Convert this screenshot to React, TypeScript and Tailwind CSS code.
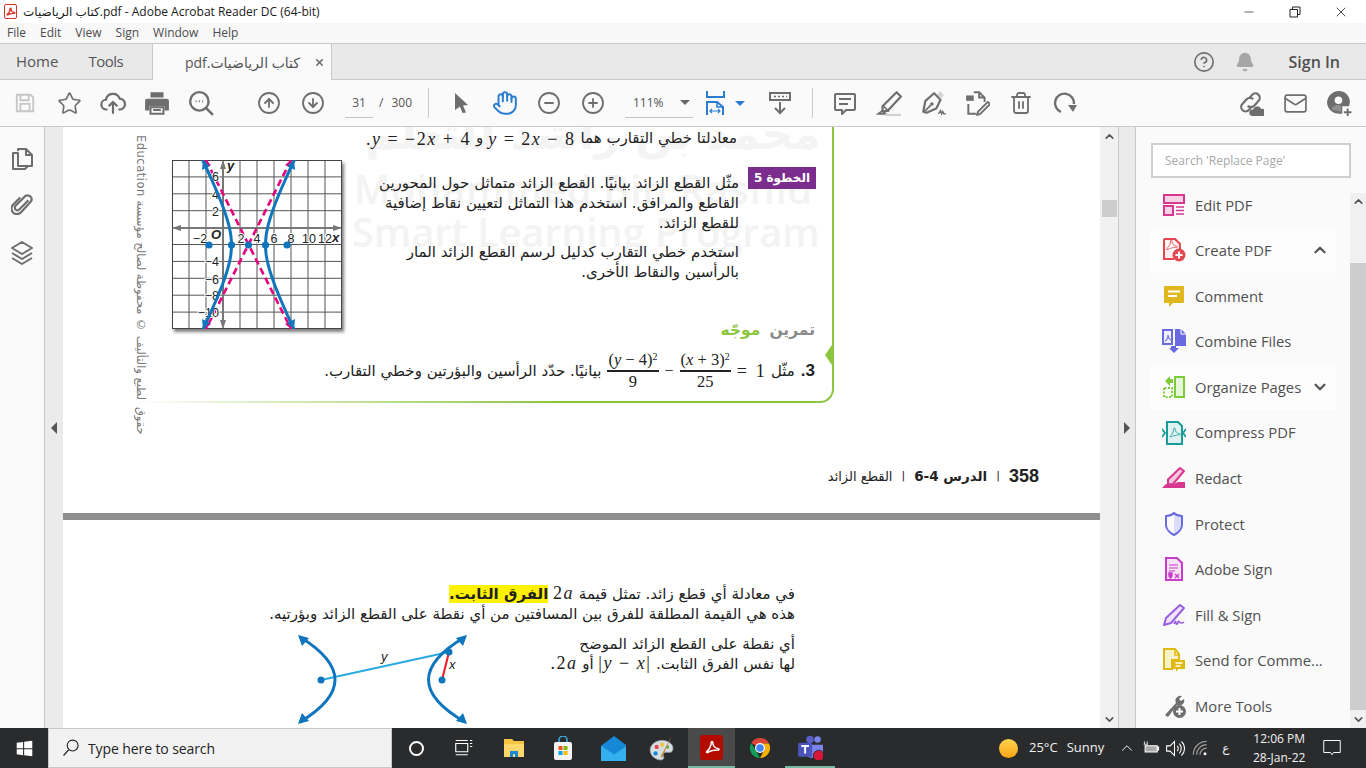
import React from 'react';
import { Star, CircleArrowUp, CircleArrowDown, CircleMinus, CirclePlus, Hand, Trash2, ChevronUp, ChevronDown, CircleHelp, Bell, X, Minus, Mail } from 'lucide-react';

const Svg: React.FC<{ size?: number; children: React.ReactNode; box?: string }> = ({ size = 24, children, box = '0 0 24 24' }) => (
  <svg width={size} height={size} viewBox={box} fill="none" stroke="none">
    {children}
  </svg>
);

const PDF_SWOOSH = 'M5 18C8 16 11 10 11 6C11 4 13 4 13 6C13 10 16 14 20 14C22 14 22 16 20 16C16 16 10 17 7 19C5 20 4 19 5 18Z';

const GRAY = '#6e6e6e';

const SaveIcon = () => (
  <Svg size={22}>
    <path d="M3 3h15l3 3v15H3z M7 3v6h9V3 M7 21v-8h10v8" stroke="#c6c6c6" strokeWidth="2" />
  </Svg>
);
const CloudUpIcon = () => (
  <Svg size={26}>
    <path d="M7 18H6a4.5 4.5 0 0 1-.5-9 6.5 6.5 0 0 1 12.6-1A5 5 0 0 1 18 18h-1 M12 22V11 M8 15l4-4 4 4" stroke={GRAY} strokeWidth="2" strokeLinejoin="round" />
  </Svg>
);
const PrintIcon = () => (
  <Svg size={26}>
    <path d="M6 2h12v5H6z M3 8h18a2 2 0 0 1 2 2v9h-4v-4H5v4H1v-9a2 2 0 0 1 2-2z" fill={GRAY} />
    <path d="M6 16h12v6H6z M8.5 18.5h7" stroke={GRAY} strokeWidth="1.8" />
  </Svg>
);
const ZoomSearchIcon = () => (
  <Svg size={26}>
    <circle cx="10.5" cy="10.5" r="8.5" stroke={GRAY} strokeWidth="2.2" />
    <path d="M16.5 16.5L23 23" stroke={GRAY} strokeWidth="2.4" />
    <path d="M7 10.5h1 M10 10.5h1 M13 10.5h1" stroke={GRAY} strokeWidth="1.8" />
  </Svg>
);
const ArrowToolIcon = () => (
  <Svg size={24}>
    <path d="M6 2L19 14L14 14.5L17 21.5L13.5 22L11 15.5L6 19z" fill={GRAY} />
  </Svg>
);
const FitWidthIcon = () => (
  <Svg size={24} box="0 0 24 24">
    <path d="M4 0v6h17V0" stroke="#2a7ccf" strokeWidth="2" />
    <path d="M4 24V11h10l6 5v8" stroke="#2a7ccf" strokeWidth="2" />
    <path d="M14 11v5h6" stroke="#2a7ccf" strokeWidth="1.5" />
    <path d="M7 20h10 M9 18l-2 2 2 2 M15 18l2 2-2 2" stroke="#2a7ccf" strokeWidth="1.2" />
  </Svg>
);
const SaveDownIcon = () => (
  <Svg size={24}>
    <path d="M2 2h20v7H2z" stroke={GRAY} strokeWidth="2" />
    <path d="M6 5.5h2 M10 5.5h2 M14 5.5h2 M18 5.5h1" stroke={GRAY} strokeWidth="1.6" />
    <path d="M12 11v11 M7 17l5 5 5-5" stroke={GRAY} strokeWidth="2" />
  </Svg>
);
const CommentIcon = () => (
  <Svg size={24}>
    <path d="M3 3h18a1 1 0 0 1 1 1v14a1 1 0 0 1-1 1h-8l-4 4v-4H3a1 1 0 0 1-1-1V4a1 1 0 0 1 1-1z" stroke={GRAY} strokeWidth="2" strokeLinejoin="round" />
    <path d="M6 8h12 M6 13h9" stroke={GRAY} strokeWidth="1.8" />
  </Svg>
);
const HighlightIcon = () => (
  <Svg size={26}>
    <path d="M19 2l4 4-12 13-5 1 0-5z" stroke={GRAY} strokeWidth="2" strokeLinejoin="round" />
    <path d="M7 15l5 5 M2 22l4-3 3 3z" stroke={GRAY} strokeWidth="1.6" />
    <path d="M8 23h15" stroke="#d0d0d0" strokeWidth="2" />
  </Svg>
);
const PenSignIcon = () => (
  <Svg size={26}>
    <path d="M13 3l6 6-4 8-9 4-3-1 2-10z" stroke={GRAY} strokeWidth="2" strokeLinejoin="round" />
    <path d="M4 20l6-6" stroke={GRAY} strokeWidth="1.5" />
    <circle cx="11" cy="13" r="1.6" fill={GRAY} />
    <path d="M16 4l3-3 3 4-3 3" fill="#d5d5d5" />
    <path d="M17 22l2-3 1 3 1-2 1 2h2" stroke={GRAY} strokeWidth="1.3" />
  </Svg>
);
const EditDocIcon = () => (
  <Svg size={26}>
    <path d="M2 5h7v5H2z" fill={GRAY} />
    <path d="M9 2h5l5 5v4 M4 13v9h7 M14 2v5h5" stroke={GRAY} strokeWidth="1.8" />
    <path d="M22 11l2 2-9 9-3 1 1-3z" stroke={GRAY} strokeWidth="1.8" strokeLinejoin="round" />
  </Svg>
);
const RotateIcon = () => (
  <Svg size={24}>
    <path d="M8 21A9.5 9.5 0 1 1 21 13" stroke={GRAY} strokeWidth="2.4" />
    <path d="M15 14h9l-4 7z" fill={GRAY} />
  </Svg>
);
const LinkCloudIcon = () => (
  <Svg size={26}>
    <path d="M11 7l3-3.5a4 4 0 0 1 6 5.5l-4 4.5a4 4 0 0 1-6 0 M14 14l-3 3.5a4 4 0 0 1-6-5.5l4-4.5a4 4 0 0 1 6 0" stroke={GRAY} strokeWidth="2" transform="translate(-1 1)" />
    <path d="M13 24a3 3 0 0 1 1-6 4 4 0 0 1 7.5-.5A3.3 3.3 0 0 1 23 24z" fill={GRAY} />
  </Svg>
);
const PersonPlusIcon = () => (
  <Svg size={26}>
    <path d="M12 1a10 10 0 0 1 10 10c0 2-.5 3-1 4h-6v7h-2.500A11 11 0 0 1 1 12 11 11 0 0 1 12 1z" fill={GRAY} />
    <circle cx="11.500" cy="9.500" r="3.500" fill="#fafafa" />
    <path d="M5 18a7 4 0 0 1 8-4l1 1v5" fill="#fafafa" opacity="0.25" />
    <path d="M20 17v7 M16.500 20.500h7" stroke={GRAY} strokeWidth="1.800" />
  </Svg>
);

const PagesIcon = () => (
  <Svg size={24}>
    <path d="M8 4V2h8l6 6v11h-4 M16 2v6h6" stroke={GRAY} strokeWidth="2" strokeLinejoin="round" />
    <path d="M8 6H3v16h12l3-3H8z" stroke={GRAY} strokeWidth="2" strokeLinejoin="round" />
  </Svg>
);
const ClipIcon = () => (
  <Svg size={22}>
    <path d="M19 9L9 19a2.800 2.800 0 0 1-4-4L16 4a4.500 4.500 0 0 1 6 6L11 22a6 6 0 0 1-9-8l8-8" stroke={GRAY} strokeWidth="2.400" transform="translate(0 -1)" />
  </Svg>
);
const LayersIcon = () => (
  <Svg size={24}>
    <path d="M12 1l10 6-10 6L2 7z M2 12l10 6 10-6 M2 17l10 6 10-6" stroke={GRAY} strokeWidth="2" strokeLinejoin="round" />
  </Svg>
);

const EditPdfIcon = () => (
  <Svg size={24}>
    <rect x="2" y="2" width="20" height="8" fill="#f6d3e5" stroke="#d83790" strokeWidth="2" />
    <rect x="2" y="13" width="9" height="9" fill="#f6d3e5" stroke="#d83790" strokeWidth="2" />
    <path d="M14 14h8 M14 17.500h8 M14 21h8" stroke="#d83790" strokeWidth="1.300" />
  </Svg>
);
const CreatePdfIcon = () => (
  <Svg size={24}>
    <path d="M2 1h11l5 5v8 M2 1v20h10" fill="#fbeced" stroke="#e34850" strokeWidth="2" />
    <path d={PDF_SWOOSH} stroke="#e34850" strokeWidth="1.200" transform="translate(1.500 -1) scale(0.650)" />
    <circle cx="17" cy="17" r="6.500" fill="#e34850" />
    <path d="M17 13.500v7 M13.500 17h7" stroke="#fff" strokeWidth="2" />
  </Svg>
);
const CommentColorIcon = () => (
  <Svg size={24}>
    <path d="M3 2h18a1 1 0 0 1 1 1v15a1 1 0 0 1-1 1H11l-4 4v-4H3a1 1 0 0 1-1-1V3a1 1 0 0 1 1-1z" fill="#e0b71f" />
    <path d="M6 7.500h12 M6 12h9" stroke="#fff" strokeWidth="2" />
  </Svg>
);
const CombineIcon = () => (
  <Svg size={24}>
    <path d="M1 1h9v14H1z" fill="#eeeefc" stroke="#6a6ae0" strokeWidth="2" />
    <path d="M3 12c2-1 3-4 3-6 0 3 1 4 3 5" stroke="#6a6ae0" strokeWidth="1.100" />
    <path d="M13 0h6l5 5v12H13z" fill="#6a6ae0" />
    <path d="M19 0v5h5" stroke="#fff" strokeWidth="1" />
    <path d="M9 17h5v2h3l-5 5-5-5h2z" fill="#6a6ae0" />
  </Svg>
);
const OrganizeIcon = () => (
  <Svg size={24}>
    <rect x="13" y="2" width="9" height="20" fill="#e7f6d9" stroke="#7ccb3a" strokeWidth="2" />
    <path d="M2 13v9h8v-9z" stroke="#7ccb3a" strokeWidth="2" strokeDasharray="2 1.500" />
    <path d="M3 6l5-5v3h3v4H8v3z" fill="#7ccb3a" />
  </Svg>
);
const CompressIcon = () => (
  <Svg size={24}>
    <path d="M5 1h11l4 4v18H5z" fill="#dff1f1" stroke="#1a9a9a" strokeWidth="2" />
    <path d={PDF_SWOOSH} stroke="#1a9a9a" strokeWidth="1.300" transform="translate(5 4) scale(0.620)" />
    <path d="M0 8l3 4-3 4 M24 8l-3 4 3 4" stroke="#1a9a9a" strokeWidth="1.800" />
  </Svg>
);
const RedactIcon = () => (
  <Svg size={24}>
    <path d="M18 2l4 3-11 13-5 .500 0-5z" fill="#f6c7de" stroke="#d83790" strokeWidth="2" strokeLinejoin="round" />
    <path d="M0 22l4-4h4l2 1 6-3h7v6z" fill="#d83790" />
  </Svg>
);
const ShieldIcon = () => (
  <Svg size={24}>
    <path d="M12 1c2 2 5 3 8 3v9c0 4-4 8-8 10z" fill="#dcdcfb" />
    <path d="M12 1c2 2 5 3 8 3v9c0 4-4 8-8 10-4-2-8-6-8-10V4c3 0 6-1 8-3z" stroke="#6a6ae0" strokeWidth="2" strokeLinejoin="round" />
  </Svg>
);
const AdobeSignIcon = () => (
  <Svg size={24}>
    <path d="M4 1h11l5 5v17H4z" fill="#f6e3f6" stroke="#c83cc8" strokeWidth="2" />
    <path d="M7 8h9 M7 11h9 M7 14h6" stroke="#c83cc8" strokeWidth="1.200" />
    <path d="M7 16h3v3l-1.500 2L7 19z M13 17l4 4 M17 17l-4 4" fill="#c83cc8" stroke="#c83cc8" strokeWidth="1.400" />
  </Svg>
);
const FillSignIcon = () => (
  <Svg size={24}>
    <path d="M18 2l4 3L9 20l-7 2 2-7z" fill="#efe4fb" stroke="#9a5fe0" strokeWidth="2" strokeLinejoin="round" />
    <path d="M12 21c1-3 2-3 2-1s2 1 2-1 2 1 3 1 2 0 3-1" stroke="#9a5fe0" strokeWidth="1.600" />
  </Svg>
);
const SendCommentIcon = () => (
  <Svg size={24}>
    <path d="M2 1h11l4 5v6H10v9H2z" fill="#f8f2c9" stroke="#dfb90f" strokeWidth="2" />
    <path d="M13 1v6h4" stroke="#dfb90f" strokeWidth="1.500" />
    <path d="M11 12h12v9h-7l-2 3v-3h-3z" fill="#dfb90f" />
    <path d="M13.500 15h7 M13.500 18h5" stroke="#fff" strokeWidth="1.300" />
  </Svg>
);
const MoreToolsIcon = () => (
  <Svg size={24}>
    <path d="M3 21L14 9a5 5 0 0 1 6-7l-3 3 2 2 3-2a5 5 0 0 1-7 6L6 23z" fill={GRAY} />
    <circle cx="17.500" cy="17.500" r="6.500" fill={GRAY} />
    <path d="M17.500 14v7 M14 17.500h7" stroke="#fff" strokeWidth="2" />
  </Svg>
);

const toolItems = [
  { label: 'Edit PDF', icon: EditPdfIcon },
  { label: 'Create PDF', icon: CreatePdfIcon, chevron: 'up' },
  { label: 'Comment', icon: CommentColorIcon },
  { label: 'Combine Files', icon: CombineIcon },
  { label: 'Organize Pages', icon: OrganizeIcon, chevron: 'down' },
  { label: 'Compress PDF', icon: CompressIcon },
  { label: 'Redact', icon: RedactIcon },
  { label: 'Protect', icon: ShieldIcon },
  { label: 'Adobe Sign', icon: AdobeSignIcon },
  { label: 'Fill & Sign', icon: FillSignIcon },
  { label: 'Send for Comme...', icon: SendCommentIcon },
  { label: 'More Tools', icon: MoreToolsIcon },
];

const Btn: React.FC<{ children: React.ReactNode }> = ({ children }) => (
  <div className="w-[44px] h-full flex items-center justify-center shrink-0">{children}</div>
);

const TitleBar = () => (
  <div className="h-[23px] bg-white flex items-center shrink-0">
    <div className="ml-[4px] w-[13px] h-[15px] rounded-[2px] border border-[#d9312b] bg-white flex items-center justify-center">
      <Svg size={11}>
        <path d={PDF_SWOOSH} stroke="#d9312b" strokeWidth="3" />
      </Svg>
    </div>
    <span className="ml-[6px] text-[12px] text-[#1a1a1a] whitespace-nowrap">كتاب الرياضيات.pdf - Adobe Acrobat Reader DC (64-bit)</span>
    <div className="ml-auto flex items-center text-[#222] mr-[2px]">
      <div className="w-[46px] flex justify-center"><Minus size={14} strokeWidth={1.200} /></div>
      <div className="w-[46px] flex justify-center">
        <Svg size={12}>
          <path d="M2 7h15v15H2z M7 7V2h15v15h-5" stroke="#222" strokeWidth="2" />
        </Svg>
      </div>
      <div className="w-[46px] flex justify-center"><X size={16} strokeWidth={1.200} /></div>
    </div>
  </div>
);

const MenuBar = () => (
  <div className="h-[20px] bg-[#f8f8f8] flex items-center gap-[14px] pl-[7px] text-[12px] text-[#4b4b4b] shrink-0">
    {['File', 'Edit', 'View', 'Sign', 'Window', 'Help'].map((m) => (
      <span key={m}>{m}</span>
    ))}
  </div>
);

const TabRow = () => (
  <div className="h-[37px] bg-[#e9e9e9] border-y border-[#c9c9c9] flex items-stretch shrink-0 text-[15px] text-[#555]">
    <div className="w-[152px] flex items-center pl-[16px] gap-[30px]">
      <span>Home</span>
      <span className="tracking-[-0.5px]">Tools</span>
    </div>
    <div className="w-[180px] -mb-px bg-[#fafafa] border-x border-[#c9c9c9] flex items-center pl-[30px]">
      <span dir="rtl" className="text-[14px] text-[#555] w-[117px] whitespace-nowrap">كتاب الرياضيات.pdf</span>
      <X size={11} strokeWidth={3} className="ml-[14px] text-[#666]" />
    </div>
    <div className="ml-auto flex items-center">
      <CircleHelp size={22} strokeWidth={1.800} className="text-[#6e6e6e]" />
      <Bell size={20} fill="#a6a6a6" className="ml-[20px] text-[#a6a6a6]" />
      <span className="ml-[34px] mr-[26px] font-semibold text-[16px] text-[#505050]">Sign In</span>
    </div>
  </div>
);

const Toolbar = () => (
  <div className="h-[47px] bg-[#fafafa] border-b border-[#c9c9c9] flex items-center pl-[3px] shrink-0 text-[#6e6e6e]">
    <Btn><SaveIcon /></Btn>
    <Btn><Star size={25} strokeWidth={1.600} /></Btn>
    <Btn><CloudUpIcon /></Btn>
    <Btn><PrintIcon /></Btn>
    <Btn><ZoomSearchIcon /></Btn>
    <div className="w-[24px]" />
    <Btn><CircleArrowUp size={24} strokeWidth={1.800} /></Btn>
    <Btn><CircleArrowDown size={24} strokeWidth={1.800} /></Btn>
    <div className="ml-[10px] w-[28px] h-[30px] border-b border-[#c4c4c4] flex items-center justify-center text-[12px] text-[#555]">31</div>
    <span className="ml-[6px] text-[12px] text-[#555]">/</span>
    <span className="ml-[8px] text-[12px] text-[#555]">300</span>
    <div className="ml-[16px] w-px h-[30px] bg-[#c9c9c9]" />
    <div className="w-[10px]" />
    <Btn><ArrowToolIcon /></Btn>
    <Btn><Hand size={26} strokeWidth={1.800} className="text-[#2a7ccf]" /></Btn>
    <Btn><CircleMinus size={24} strokeWidth={1.800} /></Btn>
    <Btn><CirclePlus size={24} strokeWidth={1.800} /></Btn>
    <div className="ml-[10px] w-[68px] h-[30px] border-b border-[#c4c4c4] flex items-center pl-[8px] text-[12px] text-[#555]">
      111%
      <span className="ml-[16px] w-0 h-0 border-x-[5px] border-x-transparent border-t-[5px] border-t-[#666]" />
    </div>
    <Btn><FitWidthIcon /></Btn>
    <span className="-ml-[2px] w-0 h-0 border-x-[5px] border-x-transparent border-t-[5px] border-t-[#2a7ccf]" />
    <div className="w-[13px]" />
    <Btn><SaveDownIcon /></Btn>
    <div className="ml-[10px] w-px h-[30px] bg-[#c9c9c9]" />
    <div className="w-[10px]" />
    <Btn><CommentIcon /></Btn>
    <Btn><HighlightIcon /></Btn>
    <Btn><PenSignIcon /></Btn>
    <Btn><EditDocIcon /></Btn>
    <Btn><Trash2 size={24} strokeWidth={1.800} /></Btn>
    <Btn><RotateIcon /></Btn>
    <div className="ml-auto flex items-center h-full pr-[5px]">
      <Btn><LinkCloudIcon /></Btn>
      <Btn><Mail size={25} strokeWidth={1.600} /></Btn>
      <Btn><PersonPlusIcon /></Btn>
    </div>
  </div>
);

const LeftRail = () => (
  <div className="flex shrink-0 h-full">
    <div className="w-[45px] bg-[#fafafa] border-r border-[#c9c9c9] flex flex-col items-center pt-[20px] gap-[22px]">
      <PagesIcon />
      <ClipIcon />
      <div className="mt-[4px]"><LayersIcon /></div>
    </div>
    <div className="w-[18px] bg-[#ebebeb] flex items-center justify-center">
      <span className="w-0 h-0 border-y-[6px] border-y-transparent border-r-[6px] border-r-[#555]" />
    </div>
  </div>
);

const hyperbola = (side: number) => {
  const pts: string[] = [];
  for (let dy = -85; dy <= 85; dy += 5) {
    const x = 76.5 + side * 17 * Math.sqrt(1 + (dy / 34) ** 2);
    pts.push(`${x.toFixed(1)},${85 + dy}`);
  }
  return pts.join(' ');
};

const BLUE = '#0f75bc';
const PINK = '#e6007e';

const gridLabels: [string, number, number][] = [
  ['−2', 28, 83], ['2', 69, 83], ['4', 85, 83], ['6', 102, 83], ['8', 119, 83], ['10', 137, 83], ['12', 153, 83],
];
const yLabels: [string, number][] = [
  ['6', 21], ['4', 39], ['2', 56], ['−4', 106], ['−6', 124], ['−8', 140], ['−10', 157],
];

const Graph = () => (
  <div className="w-[170px] h-[169px] ml-[38px] bg-white shadow-[2px_3px_3px_rgba(0,0,0,0.5)] shrink-0">
    <svg width="170" height="169" viewBox="0 0 170 169" className="font-['Liberation_Sans',sans-serif]">
      {[...Array(11).keys()].map((i) => (
        <g key={i}>
          <line x1={i * 17} y1="0" x2={i * 17} y2="169" stroke="#555" strokeWidth="1" />
          <line x1="0" y1={i * 16.9} x2="170" y2={i * 16.9} stroke="#555" strokeWidth="1" />
        </g>
      ))}
      <rect x="0.500" y="0.500" width="169" height="168" stroke="#444" fill="none" />
      <path d="M2 68H168 M51 2V167" stroke="#777" strokeWidth="2" />
      <path d="M0 68l9-3v6z M170 68l-9-3v6z M51 0l-3 9h6z M51 169l-3-9h6z" fill="#777" />
      <path d="M34 0L119 169 M119 0L34 169" stroke={PINK} strokeWidth="2.600" strokeDasharray="7 4" />
      <path d="M33 0l-1 8 7-3z M119 0l1 8-7-3z M33 169l-1-8 7 3z M119 169l1-8-7 3z" fill={PINK} />
      {gridLabels.map(([t, x, y]) => (
        <text key={t} x={x} y={y} fontSize="12.500" fill="#222" textAnchor="middle" stroke="#fff" strokeWidth="2" paintOrder="stroke">{t}</text>
      ))}
      {yLabels.map(([t, y]) => (
        <text key={t} x="47" y={y} fontSize="12.500" fill="#222" textAnchor="end" stroke="#fff" strokeWidth="2" paintOrder="stroke">{t}</text>
      ))}
      <polyline points={hyperbola(-1)} stroke={BLUE} strokeWidth="3" fill="none" />
      <polyline points={hyperbola(1)} stroke={BLUE} strokeWidth="3" fill="none" />
      <path d="M31 0l-1 10 8-4z M122 0l1 10-8-4z M31 169l-1-10 8 4z M122 169l1-10-8 4z" fill={BLUE} />
      {[37, 59.5, 76.5, 93.5, 115].map((cx) => (
        <circle key={cx} cx={cx} cy="85" r="3.600" fill={BLUE} />
      ))}
      <text x="39" y="79" fontSize="13" fontWeight="bold" fontStyle="italic" fill="#222">O</text>
      <text x="55" y="10" fontSize="13" fontWeight="bold" fontStyle="italic" fill="#222">y</text>
      <text x="160" y="82" fontSize="13" fontWeight="bold" fontStyle="italic" fill="#222">x</text>
    </svg>
  </div>
);

const M: React.FC<{ children: React.ReactNode }> = ({ children }) => (
  <span dir="ltr" className="inline-block font-['Liberation_Serif',serif] text-[18px] leading-[18px] tracking-[1.5px] whitespace-pre">{children}</span>
);
const V: React.FC<{ children: React.ReactNode }> = ({ children }) => <i>{children}</i>;

const Frac: React.FC<{ top: React.ReactNode; bottom: string }> = ({ top, bottom }) => (
  <span className="inline-flex flex-col items-center font-['Liberation_Serif',serif] text-[16.500px] leading-[18px] whitespace-pre">
    <span className="border-b-2 border-[#222] px-[1px] pb-[1px]">{top}</span>
    <span className="pt-[1px]">{bottom}</span>
  </span>
);

const AR = "font-['DejaVu_Sans',sans-serif]";

const PageTop = () => (
  <div className={`relative h-[386px] bg-white overflow-hidden shrink-0 text-[#222] ${AR}`}>
    <div className="absolute left-[270px] -top-[26px] w-[520px] text-center text-[44px] font-bold text-[#f4f4f4] whitespace-nowrap" dir="rtl">محمد بن راشد للتعلم</div>
    <div className="absolute left-[289px] top-[41px] font-['Open_Sans',sans-serif] text-[39.500px] leading-[43px] font-semibold text-[#f3f3f3] whitespace-nowrap">
      <div className="pl-[2px] tracking-[0.9px]">Mohammed Bin Rashid</div>
      <div>Smart Learning Program</div>
    </div>
    <div dir="rtl" className="absolute left-[71px] top-[3px] h-[305px] [writing-mode:vertical-rl] text-[11.500px] tracking-[0.5px] leading-[14px] text-[#777] whitespace-nowrap">
      حقوق الطبع والتأليف © محفوظة لصالح مؤسسة Education
    </div>

    <div className="relative ml-[71px] w-[700px] h-[276px] border-r-2 border-b-2 border-[#8cc63f] rounded-br-[14px] flex flex-col">
      <div dir="rtl" className="h-[23px] pr-[95px] text-[15px] tracking-[0.9px] flex items-center gap-[5px] whitespace-nowrap">
        <span>معادلتا خطي التقارب هما</span>
        <M><V>y</V> = 2<V>x</V> − 8</M>
        <span>و</span>
        <M>.<V>y</V> = −2<V>x</V> + 4</M>
      </div>

      <div className="mt-[10px] h-[182px] flex shrink-0">
        <Graph />
        <div className="flex-1 flex flex-col">
          <div className="flex justify-end pt-[7px] pr-[16px] gap-[9px]">
            <div dir="rtl" className="text-[15px] leading-[20px] tracking-[0.65px] whitespace-nowrap pt-[6px]">
              <div>مثّل القطع الزائد بيانيًا. القطع الزائد متماثل حول المحورين</div>
              <div>القاطع والمرافق. استخدم هذا التماثل لتعيين نقاط إضافية</div>
              <div>للقطع الزائد.</div>
              <div className="mt-[9px]">استخدم خطي التقارب كدليل لرسم القطع الزائد المار</div>
              <div>بالرأسين والنقاط الأخرى.</div>
            </div>
            <div dir="rtl" className="w-[68px] h-[22px] bg-[#7b2d8e] text-white text-[12px] font-bold flex items-center justify-center shrink-0">الخطوة 5</div>
          </div>
          <div dir="rtl" className="mt-auto pr-[17px] text-[15.500px] font-bold flex gap-[9px]">
            <span className="text-[#8a8a8a]">تمرين</span>
            <span className="text-[#8cc63f]">موجّه</span>
          </div>
        </div>
      </div>

      <div dir="rtl" className="mt-[9px] pr-[17px] flex items-center gap-[6px] text-[15px] whitespace-nowrap">
        <span className="font-['Liberation_Sans',sans-serif] font-bold text-[17px]">3.</span>
        <span>مثّل</span>
        <span dir="ltr" className="inline-flex items-center gap-[6px]">
          <Frac top={<>(<V>y</V> − 4)<sup className="text-[10px]">2</sup></>} bottom="9" />
          <span className="font-['Liberation_Serif',serif] text-[16px]">−</span>
          <Frac top={<>(<V>x</V> + 3)<sup className="text-[10px]">2</sup></>} bottom="25" />
          <span className="font-['Liberation_Serif',serif] text-[18px] whitespace-pre">=  1</span>
        </span>
        <span className="tracking-[0.6px]">بيانيًا. حدّد الرأسين والبؤرتين وخطي التقارب.</span>
      </div>

      <div className="absolute -bottom-[2px] left-0 w-[420px] h-[2px] bg-linear-to-r from-white to-transparent" />
      <svg width="9" height="26" viewBox="0 0 9 26" className="absolute -right-[2px] top-[215px]">
        <path d="M9 0L0 13l9 13z" fill="#8cc63f" />
      </svg>
    </div>

    <div dir="rtl" className="mt-[60px] w-[976px] flex items-center gap-[8px] text-[13px] whitespace-nowrap">
      <span className="font-['Liberation_Sans',sans-serif] font-bold text-[18px]">358</span>
      <span className="text-[11px] mx-[1px]">|</span>
      <span className="font-bold text-[13.500px]">الدرس 4-6</span>
      <span className="text-[11px] mx-[1px]">|</span>
      <span className="tracking-[0.2px]">القطع الزائد</span>
    </div>
  </div>
);

const HyperbolaFigure = () => (
  <svg width="180" height="93" viewBox="290 633 180 93" className="shrink-0">
    <path d="M321 680L449 652" stroke="#29abe2" strokeWidth="2" />
    <path d="M442 680L449 652" stroke="#ed1c24" strokeWidth="2" />
    <path d="M300 637Q370 680 300 722" stroke={BLUE} strokeWidth="3" fill="none" />
    <path d="M465 637Q392 680 465 722" stroke={BLUE} strokeWidth="3" fill="none" />
    <path d="M298 635l11 3-7 8z M298 724l11-3-7-8z M467 635l-11 3 7 8z M467 724l-11-3 7-8z" fill={BLUE} />
    <circle cx="321" cy="680" r="3.500" fill={BLUE} />
    <circle cx="442" cy="680" r="3.500" fill={BLUE} />
    <circle cx="449" cy="652" r="3.500" fill={BLUE} />
    <text x="381" y="661" fontSize="13" fontStyle="italic" fill="#222" fontFamily="Liberation Sans">y</text>
    <text x="449" y="669" fontSize="13" fontStyle="italic" fill="#222" fontFamily="Liberation Sans">x</text>
  </svg>
);

const PageBottom = () => (
  <div className={`flex-1 bg-white overflow-hidden text-[#222] text-[15px] ${AR}`}>
    <div dir="rtl" className="mt-[64px] mr-[305px] leading-[20px] tracking-[0.6px] whitespace-nowrap">
      <div>
        في معادلة أي قطع زائد. تمثل قيمة <M>2<V>a</V></M> <span className="bg-[#fff200] font-bold">الفرق الثابت.</span>
      </div>
      <div>هذه هي القيمة المطلقة للفرق بين المسافتين من أي نقطة على القطع الزائد وبؤرتيه.</div>
    </div>
    <div className="mt-[9px] flex items-start justify-between pl-[227px] pr-[305px]">
      <HyperbolaFigure />
      <div dir="rtl" className="mt-[1px] leading-[20px] tracking-[0.6px] whitespace-nowrap">
        <div>أي نقطة على القطع الزائد الموضح</div>
        <div>
          لها نفس الفرق الثابت. <M>|<V>y</V> − <V>x</V>|</M> أو <M>.2<V>a</V></M>
        </div>
      </div>
    </div>
  </div>
);

const DocScrollbar = () => (
  <div className="w-[18px] bg-[#f1f1f1] flex flex-col items-center shrink-0">
    <ChevronUp size={13} strokeWidth={3} className="mt-[3px] text-[#555]" />
    <div className="mt-[57px] w-[15px] h-[17px] bg-[#cdcdcd]" />
    <ChevronDown size={13} strokeWidth={3} className="mt-auto mb-[2px] text-[#555]" />
  </div>
);

const ToolsPanel = () => (
  <div className="w-[248px] flex shrink-0 h-full">
    <div className="w-[18px] bg-[#ebebeb] border-x border-[#c9c9c9] flex items-center justify-center">
      <span className="w-0 h-0 border-y-[6px] border-y-transparent border-l-[6px] border-l-[#555]" />
    </div>
    <div className="flex-1 bg-[#fafafa] flex flex-col pt-[16px] min-h-0">
      <div className="ml-[15px] w-[200px] h-[35px] shrink-0 bg-white border-2 border-[#cfcfcf] flex items-center pl-[12px] text-[12px] text-[#a8a8a8]">Search 'Replace Page'</div>
      <div className="flex flex-1 mt-[4px] min-h-0">
        <div className="w-[214px] pl-[15px] overflow-hidden">
          {toolItems.map((item) => {
            const Icon = item.icon;
            return (
              <div key={item.label} className={`w-[185px] h-[45.550px] pl-[11px] flex items-center gap-[9px] text-[14.800px] text-[#505050] whitespace-nowrap ${item.chevron ? 'bg-[#fdfdfd]' : ''}`}>
                <Icon />
                <span>{item.label}</span>
                {item.chevron === 'up' && <ChevronUp size={18} strokeWidth={3} className="ml-auto mr-[7px] text-[#555]" />}
                {item.chevron === 'down' && <ChevronDown size={18} strokeWidth={3} className="ml-auto mr-[7px] text-[#555]" />}
              </div>
            );
          })}
        </div>
        <div className="mt-[11px] w-[16px] bg-[#f0f0f0] flex flex-col items-center">
          <ChevronUp size={13} strokeWidth={3} className="mt-[2px] text-[#555]" />
          <div className="mt-[55px] w-full h-[447px] bg-[#cdcdcd]" />
          <ChevronDown size={13} strokeWidth={3} className="mt-[3px] text-[#555]" />
        </div>
      </div>
    </div>
  </div>
);

const Taskbar = () => (
  <div className="h-[40px] bg-[#2a2b2d] flex items-center shrink-0 text-white relative">
    <div className="w-[48px] flex justify-center">
      <Svg size={17}>
        <path d="M1 4l9-1.300V11.500H1z M11.500 2.500L23 1v10.500H11.500z M1 13h9v8.500L1 20z M11.500 13H23v10l-11.500-1.500z" fill="#fff" />
      </Svg>
    </div>
    <div className="w-[344px] h-full bg-[#f2f2f2] border border-[#c8c8c8] flex items-center text-[#222] pl-[12px]">
      <Svg size={20}>
        <circle cx="14" cy="9" r="6.500" stroke="#222" strokeWidth="1.300" />
        <path d="M9.500 14L3 21" stroke="#222" strokeWidth="1.500" />
      </Svg>
      <span className="ml-[7px] text-[14px] tracking-[-0.1px]">Type here to search</span>
    </div>
    <div className="flex items-center h-full">
      <div className="w-[48px] flex justify-center">
        <span className="w-[15px] h-[15px] rounded-full border-2 border-white" />
      </div>
      <div className="w-[47px] flex justify-center">
        <Svg size={18}>
          <path d="M1 6h16v11H1z M1 2h16 M1 21h16 M20 2h3 M20 6h3 M20 10h3" stroke="#fff" strokeWidth="1.500" />
        </Svg>
      </div>
      <div className="w-[54px] flex justify-center">
        <Svg size={24}>
          <path d="M2 3h8l2 2h10v16H2z" fill="#f5c342" />
          <path d="M2 8h20v13H2z" fill="#ffd86b" />
          <path d="M8 21v-6h8v6h-3v-3h-2v3z" fill="#1b88d4" />
        </Svg>
      </div>
      <div className="w-[44px] flex justify-center">
        <Svg size={24}>
          <path d="M8 7V4a4 4 0 0 1 8 0v3" stroke="#3ab4e6" strokeWidth="1.500" />
          <rect x="3" y="6" width="18" height="18" rx="2" fill="#f4f4f4" />
          <path d="M7.500 10h4v4h-4z" fill="#f25022" /><path d="M12.500 10h4v4h-4z" fill="#7fba00" />
          <path d="M7.500 15h4v4h-4z" fill="#00a4ef" /><path d="M12.500 15h4v4h-4z" fill="#ffb900" />
        </Svg>
      </div>
      <div className="w-[56px] flex justify-center">
        <Svg size={26}>
          <path d="M1 10L13 1l12 9v15H1z" fill="#1589d8" />
          <path d="M1 10l12 8 12-8v15H1z" fill="#34b0ee" />
        </Svg>
      </div>
      <div className="w-[40px] flex justify-center">
        <Svg size={26}>
          <path d="M13 5c-6 0-11 4-11 9s5 9 10 9c3 0 3-3 2-4s0-3 3-3h3c3 0 3-3 3-4 0-4-5-7-10-7z" fill="#d8dde2" stroke="#98a4b0" strokeWidth="0.800" />
          <circle cx="8" cy="11" r="2" fill="#e34850" /><circle cx="13" cy="9" r="2" fill="#f5c342" />
          <circle cx="7" cy="17" r="2" fill="#1589d8" /><circle cx="18" cy="11" r="1.600" fill="#55b04a" />
          <path d="M22 1L13 21l-1.500-1z" fill="#c08a3c" />
        </Svg>
      </div>
      <div className="ml-[7px] w-[47px] h-full bg-[#4a4a4a] flex items-center justify-center border-b-2 border-[#76b9a0]">
        <div className="w-[23px] h-[25px] rounded-[3px] bg-[#b30b00] flex items-center justify-center">
          <Svg size={18}>
            <path d={PDF_SWOOSH} stroke="#fff" strokeWidth="2" />
          </Svg>
        </div>
      </div>
      <div className="w-[50px] flex justify-center">
        <Svg size={24}>
          <path d="M12 12L3.300 7A10 10 0 0 1 21 7.500H12z" fill="#db4437" />
          <path d="M12 22A10 10 0 0 1 3.300 7L8 15l4 7z" fill="#0f9d58" />
          <path d="M21 7.500A10 10 0 0 1 12 22l4-7.500L12 7.500z" fill="#f4b400" />
          <circle cx="12" cy="12" r="5" fill="#fff" />
          <circle cx="12" cy="12" r="3.800" fill="#4285f4" />
        </Svg>
      </div>
      <div className="w-[50px] h-full flex items-center justify-center border-b-2 border-[#76b9a0]">
        <Svg size={26}>
          <circle cx="19" cy="5" r="3" fill="#7b83eb" />
          <circle cx="12" cy="5" r="3.500" fill="#5b5fc7" />
          <path d="M9 10h15v9a3 3 0 0 1-3 3h-8a4 4 0 0 1-4-4z" fill="#7b83eb" />
          <rect x="1" y="8" width="13" height="13" rx="1.500" fill="#4b53bc" />
          <path d="M4 11h7 M7.500 11v7" stroke="#fff" strokeWidth="1.800" />
          <circle cx="20" cy="20" r="5" fill="#d6173a" stroke="#2a2b2d" strokeWidth="0.800" />
        </Svg>
      </div>
    </div>
    <div className="absolute left-[999px] top-0 h-full flex items-center text-[13px] text-[#f2f2f2] whitespace-nowrap">
      <span className="w-[19px] h-[19px] rounded-full bg-linear-to-b from-[#ffd54a] to-[#f7a30c]" />
      <span className="ml-[11px]">25°C</span>
      <span className="ml-[9px]">Sunny</span>
      <ChevronUp size={18} strokeWidth={1.300} className="ml-[14px]" />
      <div className="ml-[7px]">
        <Svg size={17}>
          <path d="M3 8h17v9H3z M20 10h2v4h-2z" stroke="#fff" strokeWidth="1.500" fill="#fff" fillOpacity="0.600" />
          <path d="M2 2v4 M6 2v4 M1 6h6" stroke="#fff" strokeWidth="1.200" />
        </Svg>
      </div>
      <div className="ml-[4px]">
        <Svg size={21}>
          <path d="M3 9h4l5-5v16l-5-5H3z M15 9a4 4 0 0 1 0 6 M17.500 6.500a8 8 0 0 1 0 11 M20 4a11 11 0 0 1 0 16" stroke="#fff" strokeWidth="1.200" />
        </Svg>
      </div>
      <div className="ml-[5px]">
        <Svg size={20}>
          <path d="M4 20A16 16 0 0 1 20 4 M8 20A12 12 0 0 1 20 8 M12 20a8 8 0 0 1 8-8" stroke="#999" strokeWidth="1.500" />
          <circle cx="18" cy="19" r="1.800" fill="#fff" />
        </Svg>
      </div>
      <span className="ml-[12px] font-['DejaVu_Sans',sans-serif] text-[12px] w-[14px]">ع</span>
      <div className="ml-[12px] w-[62px] flex flex-col items-center text-[12px] leading-[19px]">
        <span>12:06 PM</span>
        <span>28-Jan-22</span>
      </div>
      <div className="ml-[13px]">
        <Svg size={18}>
          <path d="M1 2h22v16h-9l-2 3-2-3H1z" stroke="#fff" strokeWidth="1.300" />
        </Svg>
      </div>
    </div>
  </div>
);

export default function App() {
  return (
    <div className="w-[1366px] h-[768px] flex flex-col overflow-hidden bg-white font-['Open_Sans','DejaVu_Sans',sans-serif]">
      <TitleBar />
      <MenuBar />
      <TabRow />
      <Toolbar />
      <div className="flex-1 flex min-h-0">
        <LeftRail />
        <div className="w-[1037px] flex flex-col shrink-0">
          <PageTop />
          <div className="h-[7px] bg-[#8f8f8f] shrink-0" />
          <PageBottom />
        </div>
        <DocScrollbar />
        <ToolsPanel />
      </div>
      <Taskbar />
    </div>
  );
}
